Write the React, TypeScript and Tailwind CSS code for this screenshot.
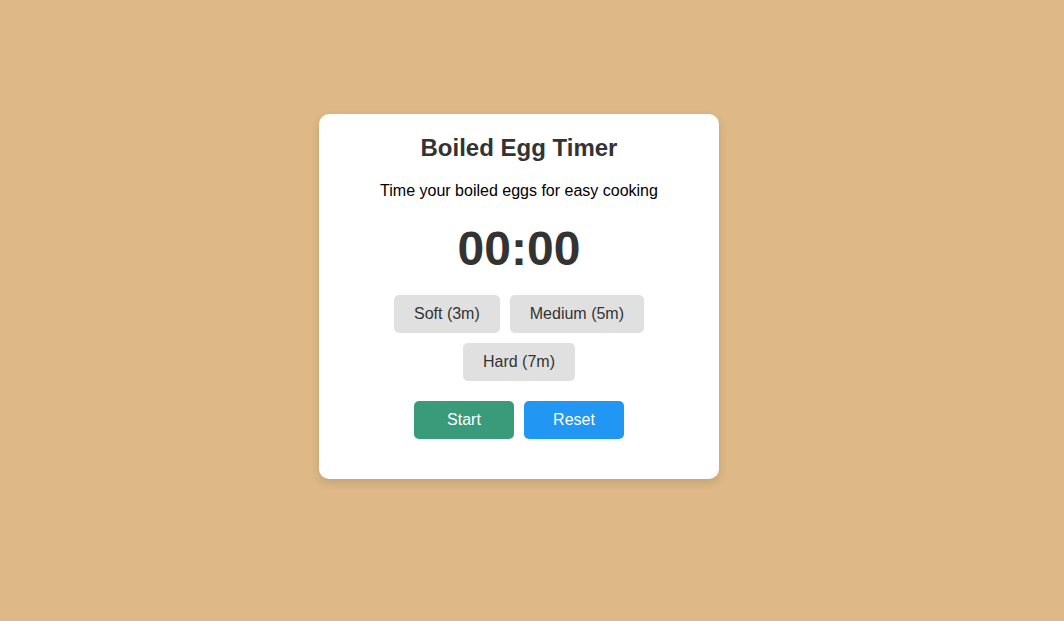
import { useEffect, useState } from 'react';

const presets = [
  { label: 'Soft (3m)', seconds: 180 },
  { label: 'Medium (5m)', seconds: 300 },
  { label: 'Hard (7m)', seconds: 420 },
];

export default function App() {
  const [timeLeft, setTimeLeft] = useState(0);
  const [running, setRunning] = useState(false);

  useEffect(() => {
    if (!running) return;
    const id = setInterval(() => {
      setTimeLeft((t) => {
        if (t <= 1) {
          setRunning(false);
          return 0;
        }
        return t - 1;
      });
    }, 1000);
    return () => clearInterval(id);
  }, [running]);

  const mm = String(Math.floor(timeLeft / 60)).padStart(2, '0');
  const ss = String(timeLeft % 60).padStart(2, '0');

  return (
    <div className="min-h-screen w-full bg-[#deb887] flex items-center justify-center pr-[26px] pb-[28px] font-['Liberation_Sans',Arial,sans-serif]">
      <div className="w-[400px] bg-white rounded-[10px] shadow-[0_4px_10px_rgba(0,0,0,0.12)] px-5 pt-5 pb-10 text-center">
        <h1 className="text-[24px] leading-[28px] font-bold text-[#333]">Boiled Egg Timer</h1>
        <p className="mt-[20px] text-[16px] leading-[18px] text-black">
          Time your boiled eggs for easy cooking
        </p>

        {/* Tiempo restante */}
        <div className="mt-[21px] text-[48px] leading-[55px] font-bold text-[#333]">
          {mm}:{ss}
        </div>

        <div className="mt-[19px] flex flex-wrap justify-center gap-[10px]">
          {presets.map((p) => (
            <button
              key={p.label}
              onClick={() => {
                setRunning(false);
                setTimeLeft(p.seconds);
              }}
              className="h-[38px] px-5 rounded-[5px] bg-[#e0e0e0] text-[#333] text-[16px] hover:bg-[#d0d0d0]"
            >
              {p.label}
            </button>
          ))}
        </div>

        <div className="mt-[20px] flex justify-center gap-[10px]">
          <button
            onClick={() => timeLeft > 0 && setRunning(true)}
            className="w-[100px] h-[38px] rounded-[5px] bg-[#3a9b7a] text-white text-[16px]"
          >
            Start
          </button>
          <button
            onClick={() => {
              setRunning(false);
              setTimeLeft(0);
            }}
            className="w-[100px] h-[38px] rounded-[5px] bg-[#2196f3] text-white text-[16px]"
          >
            Reset
          </button>
        </div>
      </div>
    </div>
  );
}
